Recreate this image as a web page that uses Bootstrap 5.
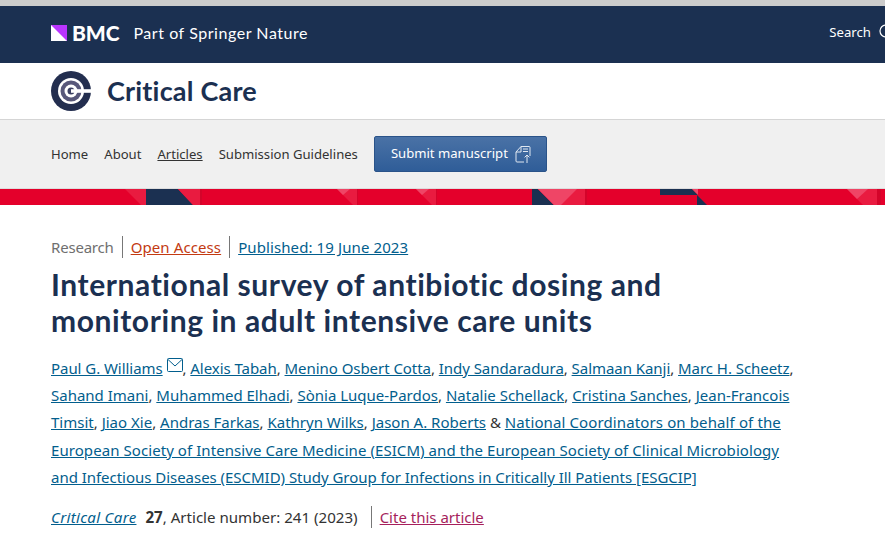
<!DOCTYPE html>
<html lang="en">
<head>
  <meta charset="UTF-8">
  <meta name="viewport" content="width=device-width, initial-scale=1.0">
  <title>International survey of antibiotic dosing</title>
  <link href="https://cdn.jsdelivr.net/npm/bootstrap@5.3.0/dist/css/bootstrap.min.css" rel="stylesheet">
  <style>
    html, body { height: 543px; overflow: hidden; }
    body { font-family: "Noto Sans", "Open Sans", sans-serif; font-size: 15px; color: #333; background: #fff; }
    .top-strip { height: 6px; background: #ccc; }
    .brand-bar { height: 57px; background: #1b3051; color: #fff; padding: 0 0 4px 51px; width: 895px; }
    .bmc-word { font-family: Lato, sans-serif; font-weight: 900; font-size: 21px; letter-spacing: -.1px; margin-left: 5px; line-height: 1; }
    .part-of { font-family: Lato, sans-serif; font-size: 16px; letter-spacing: .55px; margin-left: 14px; }
    .search-link { margin-left: auto; font-size: 13.2px; }
    .search-link svg { margin-left: 8px; }
    .journal-bar { height: 57px; padding-left: 51px; border-bottom: 1px solid #d5d5d5; }
    .journal-name { font-family: Lato, sans-serif; font-weight: 700; font-size: 27px; color: #1b3051; margin-left: 16px; letter-spacing: .2px; }
    .sub-nav { height: 69px; background: #f0f0f0; padding: 1px 0 0 51px; border-bottom: 1px solid #ddd; font-size: 13.1px; }
    .sub-nav a { color: #333; text-decoration: none; margin-right: 16px; }
    .sub-nav a.is-current { text-decoration: underline; }
    .sub-nav a.submit-btn { display: flex; align-items: center; margin: -1px 0 0; height: 36px; width: 173px; padding-left: 16px; color: #fff; background: linear-gradient(#4a72a6, #2f5d98); border: 1px solid #2a5389; border-radius: 2px; }
    .submit-btn svg { margin-left: 7px; }
    .pattern-bar { display: block; width: 885px; height: 16px; }
    .article-head { padding: 31px 51px 0; }
    .meta-line { font-size: 15px; line-height: 22px; }
    .meta-line > * + * { border-left: 1px solid #777; margin-left: 8px; padding-left: 8px; }
    .meta-kind { color: #6f6f6f; letter-spacing: -.2px; }
    .link-open { color: #c33a12; letter-spacing: .1px; }
    .link-blue { color: #025e8d; }
    .link-date { letter-spacing: .1px; }
    .link-cite { color: #a61f5c; }
    .article-title { font-family: Lato, sans-serif; font-weight: 700; font-size: 30px; line-height: 36px; color: #1b3051; margin: 8px 0 17px; letter-spacing: .58px; width: 700px; }
    .author-list { font-size: 15px; line-height: 27.2px; width: 790px; margin: 0 0 15px; color: #333; }
    .author-list a { color: #025e8d; }
    .author-list svg { vertical-align: 2px; }
    .author-list a.stretch-line { letter-spacing: .07px; }
    .author-list a.stretch-more { letter-spacing: .12px; }
    .author-list a.squeeze-line { letter-spacing: -.03px; }
    .first-authors { letter-spacing: -.05px; }
    .cite-line { line-height: 22px; }
    .cite-source { font-size: 15.1px; }
    .cite-source i a { letter-spacing: .3px; }
    .cite-source b { margin-left: 5px; }
    .cite-action { font-size: 15px; border-left: 1px solid #777; margin-left: 13px; padding-left: 8px; }
  </style>
</head>
<body>
  <div class="top-strip"></div>

  <!-- BMC bar -->
  <div class="brand-bar d-flex align-items-center">
    <svg width="16" height="16" viewBox="0 0 16 16"><rect width="16" height="16" fill="#fff"/><polygon points="0,0 16,0 16,16" fill="#b934ff"/></svg>
    <span class="bmc-word">BMC</span>
    <span class="part-of">Part of Springer Nature</span>
    <span class="search-link d-flex align-items-center">Search
      <svg width="16" height="16" viewBox="0 0 16 16" fill="none" stroke="#fff" stroke-width="1.2"><circle cx="7" cy="7" r="6"/><path d="M11.5 11.5 15 15"/></svg>
    </span>
  </div>

  <!-- journal -->
  <div class="journal-bar d-flex align-items-center">
    <svg width="40" height="40" viewBox="0 0 40 40">
      <circle cx="20" cy="20" r="20" fill="#232e4f"/>
      <circle cx="20" cy="20" r="13" fill="#fff"/>
      <circle cx="20" cy="20" r="10.5" fill="#58587a"/>
      <circle cx="20" cy="20" r="6.5" fill="#fff"/>
      <circle cx="20" cy="20" r="3.5" fill="#3c4163"/>
      <rect x="20" y="18.2" width="20" height="3.6" fill="#fff"/>
    </svg>
    <span class="journal-name">Critical Care</span>
  </div>

  <!-- sub nav -->
  <nav class="sub-nav d-flex align-items-center">
    <a href="#">Home</a>
    <a href="#">About</a>
    <a href="#" class="is-current">Articles</a>
    <a href="#">Submission Guidelines</a>
    <a href="#" class="submit-btn">Submit manuscript
      <svg width="16" height="17" viewBox="0 0 16 17" fill="none" stroke="#dfe7f1" stroke-width="1"><path d="M9 16H2a1 1 0 0 1-1-1V6L6 .5h8a1 1 0 0 1 1 1V10"/><path d="M6 .5V6H1"/><path d="M8 3h5M8 5.5h5"/><path d="M12 17V9M9.6 11.4 12 9l2.4 2.4"/></svg>
    </a>
  </nav>

  <!-- red pattern -->
  <svg class="pattern-bar" viewBox="0 0 885 16" preserveAspectRatio="none">
    <rect width="885" height="16" fill="#e4002b"/>
    <polygon points="125,0 146,0 146,16 141,16" fill="#e91b40"/>
    <polygon points="146,0 178,0 193,16 146,16" fill="#1b3051"/>
    <polygon points="178,0 200,0 200,16 193,16" fill="#e91b40"/>
    <rect x="200" width="2" height="16" fill="#d4042a"/>
    <polygon points="337,0 357,0 357,16 353,16" fill="#e91b40"/>
    <polygon points="337,0 350,0 343,6" fill="#ef4566"/>
    <rect x="357" width="1" height="16" fill="#d4042a"/>
    <polygon points="416,0 436,0 436,16 432,16" fill="#e91b40"/>
    <polygon points="416,0 429,0 422,6" fill="#ef4566"/>
    <rect x="436" width="1" height="16" fill="#d4042a"/>
    <polygon points="532,0 538,0 554,16 532,16" fill="#1b3051"/>
    <polygon points="538,0 585,0 585,16 554,16" fill="#e91b40"/>
    <polygon points="538,0 577,0 561,16 554,16" fill="#ef4566"/>
    <rect x="585" width="2" height="16" fill="#d4042a"/>
    <rect x="660" width="32" height="6" fill="#1b3051"/>
    <polygon points="692,0 698,6 692,6" fill="#1b3051"/>
    <polygon points="692,0 698,0 698,6" fill="#ef4566"/>
    <polygon points="697,6 707,16 697,16" fill="#1b3051"/>
    <polygon points="847,0 877,0 877,16 863,16" fill="#e91b40"/>
    <polygon points="847,0 868,0 857,10" fill="#ef4566"/>
    <rect x="877" width="4" height="16" fill="#d4042a"/>
  </svg>

  <!-- article header -->
  <div class="article-head">
    <div class="meta-line d-flex">
      <span class="meta-kind">Research</span>
      <span><a href="#" class="link-open">Open Access</a></span>
      <span><a href="#" class="link-blue link-date">Published: 19 June 2023</a></span>
    </div>
    <h1 class="article-title">International survey of antibiotic dosing and monitoring in adult intensive care units</h1>
    <p class="author-list">
      <span class="first-authors"><a href="#">Paul G. Williams</a>
      <svg width="16" height="14" viewBox="0 0 16 14" fill="none" stroke="#025e8d" stroke-width="1"><rect x=".5" y=".5" width="15" height="13" rx="1"/><path d="M1 1.5 8 8l7-6.5"/></svg>, <a href="#">Alexis Tabah</a>, <a href="#">Menino Osbert Cotta</a>, <a href="#">Indy Sandaradura</a>, <a href="#">Salmaan Kanji</a>, <a href="#">Marc H. Scheetz</a>,</span><br>
      <a href="#">Sahand Imani</a>, <a href="#">Muhammed Elhadi</a>, <a href="#">Sònia Luque-Pardos</a>, <a href="#">Natalie Schellack</a>, <a href="#">Cristina Sanches</a>, <a href="#">Jean-Francois</a><br>
      <a href="#">Timsit</a>, <a href="#">Jiao Xie</a>, <a href="#">Andras Farkas</a>, <a href="#">Kathryn Wilks</a>, <a href="#">Jason A. Roberts</a> &amp; <a href="#" class="stretch-more">National Coordinators on behalf of the</a><br>
      <a href="#" class="stretch-line">European Society of Intensive Care Medicine (ESICM) and the European Society of Clinical Microbiology</a><br>
      <a href="#" class="squeeze-line">and Infectious Diseases (ESCMID) Study Group for Infections in Critically Ill Patients [ESGCIP]</a>
    </p>
    <div class="cite-line d-flex">
      <span class="cite-source"><i><a href="#" class="link-blue">Critical Care</a></i> <b>27</b>, Article number: 241 (2023)</span>
      <span class="cite-action"><a href="#" class="link-cite">Cite this article</a></span>
    </div>
  </div>

  <script src="https://cdn.jsdelivr.net/npm/bootstrap@5.3.0/dist/js/bootstrap.bundle.min.js"></script>
</body>
</html>
